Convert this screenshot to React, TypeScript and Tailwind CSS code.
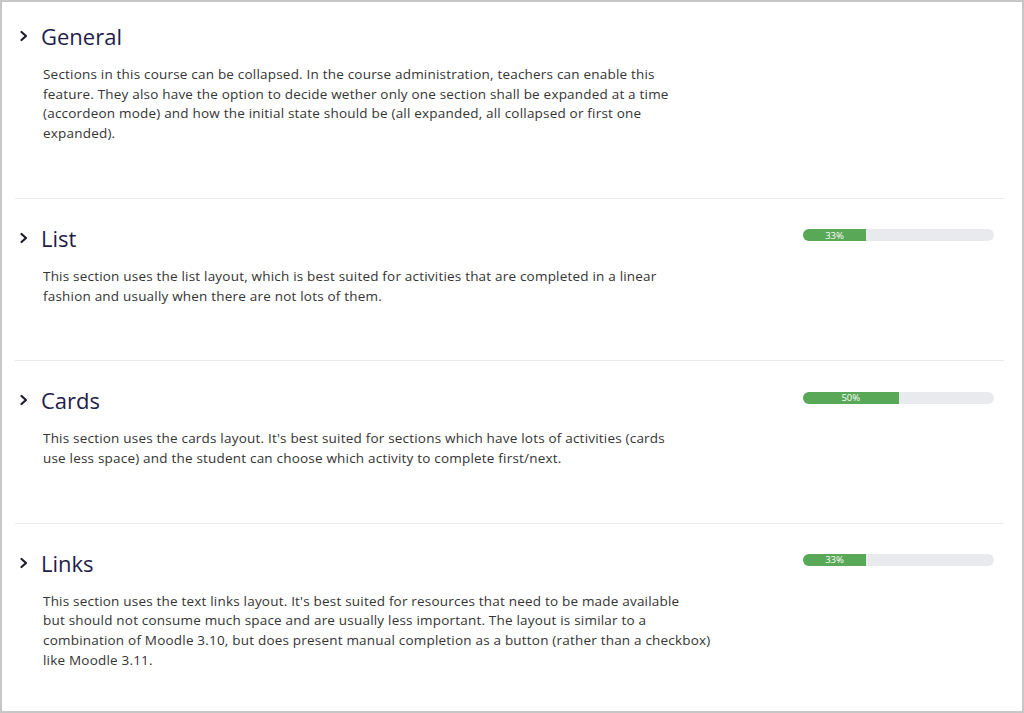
import React from 'react'

interface Section {
  title: string
  progress?: number
  lines: string[]
}

const sections: Section[] = [
  {
    title: 'General',
    lines: [
      'Sections in this course can be collapsed. In the course administration, teachers can enable this',
      'feature. They also have the option to decide wether only one section shall be expanded at a time',
      '(accordeon mode) and how the initial state should be (all expanded, all collapsed or first one',
      'expanded).',
    ],
  },
  {
    title: 'List',
    progress: 33,
    lines: [
      'This section uses the list layout, which is best suited for activities that are completed in a linear',
      'fashion and usually when there are not lots of them.',
    ],
  },
  {
    title: 'Cards',
    progress: 50,
    lines: [
      "This section uses the cards layout. It's best suited for sections which have lots of activities (cards",
      'use less space) and the student can choose which activity to complete first/next.',
    ],
  },
  {
    title: 'Links',
    progress: 33,
    lines: [
      "This section uses the text links layout. It's best suited for resources that need to be made available",
      'but should not consume much space and are usually less important. The layout is similar to a',
      'combination of Moodle 3.10, but does present manual completion as a button (rather than a checkbox)',
      'like Moodle 3.11.',
    ],
  },
]

function Chevron() {
  return (
    <svg width="10" height="12" viewBox="0 0 10 12" className="shrink-0">
      <path d="M2.5 2 L7 6 L2.5 10" fill="none" stroke="#1d1d2b" strokeWidth="2.2" strokeLinecap="round" strokeLinejoin="round" />
    </svg>
  )
}

function Progress({ value }: { value: number }) {
  return (
    <div className="w-[191px] h-[12px] rounded-full bg-[#e9eaee] overflow-hidden flex mr-[10px] -mt-[5px]">
      <div
        className="h-full bg-[#58a858] flex items-center justify-center text-[9.5px] leading-none text-white"
        style={{ width: `${value}%` }}
      >
        {value}%
      </div>
    </div>
  )
}

export default function App() {
  return (
    <div className="w-[1024px] h-[713px] bg-white border-2 border-[#c6c6c6] overflow-hidden pl-[13px] pr-[18px]" style={{ fontFamily: '"Open Sans", sans-serif' }}>
      {sections.map((s, i) => (
        <div key={s.title} className={`${i === 0 ? 'pt-[20px]' : 'pt-[25px] border-t border-[#ebebed]'} pb-[54px]`}>
          <div className="flex items-center h-[28px]">
            <div className="w-[26px] flex justify-start pl-[4px]">
              <Chevron />
            </div>
            <h3 className="text-[22px] leading-[28px] text-[#1f1d4a] flex-1">{s.title}</h3>
            {s.progress !== undefined && <Progress value={s.progress} />}
          </div>
          <p className="mt-[15px] ml-[28px] text-[13.5px] tracking-[0.2px] leading-[19.7px] text-[#343434]">
            {s.lines.map((l, j) => (
              <span key={j} className="block whitespace-nowrap">{l}</span>
            ))}
          </p>
        </div>
      ))}
    </div>
  )
}
